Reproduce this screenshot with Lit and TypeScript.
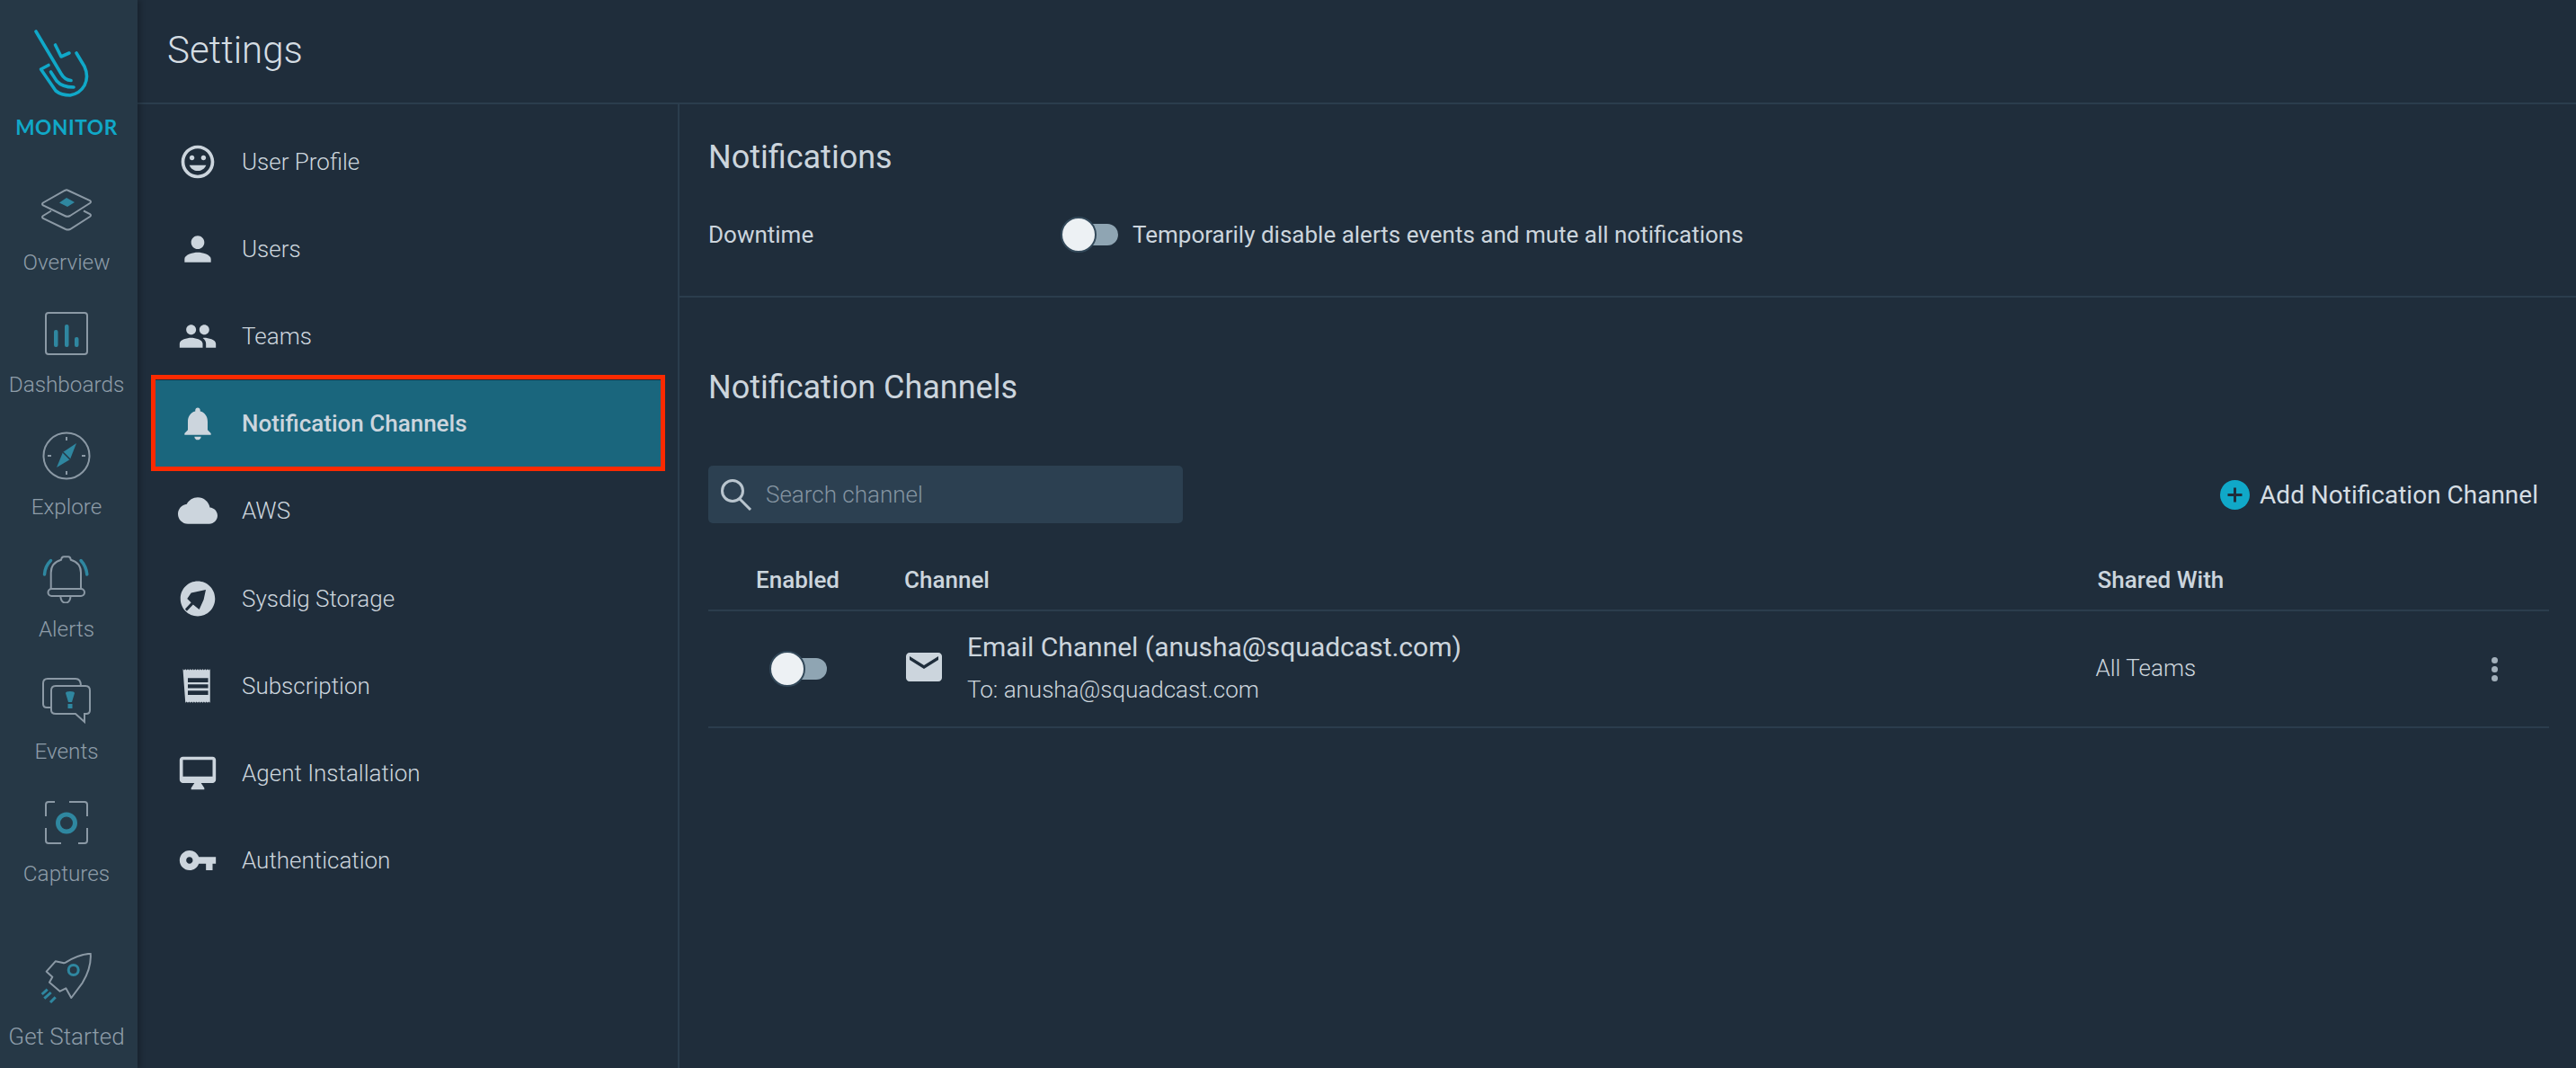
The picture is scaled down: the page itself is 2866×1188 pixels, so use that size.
import { LitElement, html, css, svg } from "lit";
import { customElement } from "lit/decorators.js";

const ACCENT = "#2f87a0";
const LINE = "#8b99a5";

const sideItems = [
  { label: "Overview", vb: "0 0 56 50", w: 56, h: 50, art: svg`
    <path d="M29 1.500 L54 13 Q56 14.500 54 16 L32 30 Q29 31.500 26 30 L2 18.500 Q0 17 2 15.500 L26 2 Q28 1 29 1.500Z" fill="none" stroke="${LINE}" stroke-width="2"/>
    <path d="M11 24.500 L2 30 Q0 31.500 2 33 L27 45 Q29.500 46 32 45 L54 31 Q56 29.500 54 28 L47 24.500" fill="none" stroke="${LINE}" stroke-width="2"/>
    <path d="M28 10 L37 15 L29 20 L20 15.500Z" fill="${ACCENT}"/>` },
  { label: "Dashboards", vb: "0 0 48 48", w: 48, h: 48, art: svg`
    <rect x="1" y="1" width="46" height="46" rx="3" fill="none" stroke="${LINE}" stroke-width="2"/>
    <rect x="10" y="20" width="4.500" height="19" rx="2" fill="${ACCENT}"/>
    <rect x="22" y="14" width="4.500" height="25" rx="2" fill="${ACCENT}"/>
    <rect x="33" y="28" width="4.500" height="11" rx="2" fill="${ACCENT}"/>` },
  { label: "Explore", vb: "0 0 54 54", w: 54, h: 54, art: svg`
    <circle cx="27" cy="27" r="25.500" fill="none" stroke="${LINE}" stroke-width="2"/>
    <path d="M27 6v4M27 44v4M6 27h4M44 27h4" stroke="${LINE}" stroke-width="2"/>
    <path d="M38 13 L31 31 L16 40 L23 23Z" fill="${ACCENT}"/>
    <path d="M23 23 L31 31" stroke="#263846" stroke-width="1.500"/>` },
  { label: "Alerts", vb: "-1 15 90 56", w: 90, h: 56, art: svg`
    <path d="M26.700 55 V37 Q26.700 26 38 22.700 Q38.500 19.300 41 19.300 H46 Q48.300 19.300 48.800 22.700 Q60 26 60 37 V55" fill="none" stroke="${LINE}" stroke-width="2"/>
    <rect x="23.500" y="55" width="40.500" height="8" rx="4" fill="none" stroke="${LINE}" stroke-width="2"/>
    <path d="M37.300 63.300 Q38 70.500 43 70.500 Q48 70.500 48.500 63.300" fill="none" stroke="${LINE}" stroke-width="2"/>
    <path d="M19.500 39 Q20 30 26.500 23.500 M66.800 39 Q66 30 60 23.500" fill="none" stroke="${ACCENT}" stroke-width="3.500" stroke-linecap="round"/>` },
  { label: "Events", vb: "0 -2 54 54", w: 54, h: 54, art: svg`
    <path d="M9 33 H5 Q1 33 1 29 V6 Q1 1 6 1 H37 Q43 1 43 9" fill="none" stroke="${LINE}" stroke-width="2"/>
    <path d="M15 9 H48 Q53 9 53 14 V36 Q53 40 49 40 H47 V49 L37 40 H15 Q10 40 10 36 V14 Q10 9 15 9Z" fill="none" stroke="${LINE}" stroke-width="2"/>
    <path d="M26 17 Q26 15 31 15 Q36 15 36 17 L33 27 H29Z M28.500 29 H33.500 V34 H28.500Z" fill="${ACCENT}"/>` },
  { label: "Captures", vb: "0 0 48 48", w: 48, h: 48, art: svg`
    <path d="M11 1 H4 Q1 1 1 4 V17 M27 1 H44 Q47 1 47 4 V17 M18 47 H4 Q1 47 1 44 V30 M37 47 H44 Q47 47 47 44 V30" fill="none" stroke="${LINE}" stroke-width="2"/>
    <circle cx="24" cy="24.500" r="9.500" fill="none" stroke="${ACCENT}" stroke-width="5"/>` },
];

const navItems = [
  { label: "User Profile", d: "M11.99 2C6.47 2 2 6.48 2 12s4.47 10 9.99 10C17.52 22 22 17.52 22 12S17.52 2 11.99 2zM12 20c-4.42 0-8-3.58-8-8s3.58-8 8-8 8 3.58 8 8-3.58 8-8 8zm3.500-9c.83 0 1.500-.67 1.500-1.500S16.330 8 15.500 8 14 8.670 14 9.500s.67 1.500 1.500 1.500zm-7 0c.83 0 1.500-.67 1.500-1.500S9.330 8 8.500 8 7 8.670 7 9.500 7.670 11 8.500 11zm3.500 6.500c2.330 0 4.310-1.460 5.110-3.500H6.890c.8 2.040 2.780 3.500 5.110 3.500z" },
  { label: "Users", d: "M12 12c2.210 0 4-1.790 4-4s-1.790-4-4-4-4 1.790-4 4 1.790 4 4 4zm0 2c-2.670 0-8 1.340-8 4v2h16v-2c0-2.660-5.330-4-8-4z" },
  { label: "Teams", d: "M16 11c1.660 0 2.990-1.340 2.990-3S17.660 5 16 5c-1.660 0-3 1.340-3 3s1.340 3 3 3zm-8 0c1.660 0 2.990-1.340 2.990-3S9.660 5 8 5C6.340 5 5 6.340 5 8s1.340 3 3 3zm0 2c-2.330 0-7 1.170-7 3.500V19h14v-2.500c0-2.330-4.670-3.500-7-3.500zm8 0c-.29 0-.62.02-.97.05 1.160.84 1.970 1.970 1.970 3.450V19h6v-2.500c0-2.330-4.670-3.500-7-3.500z" },
  { label: "Notification Channels", active: true, d: "M12 22c1.100 0 2-.9 2-2h-4c0 1.100.89 2 2 2zm6-6v-5c0-3.070-1.640-5.640-4.500-6.320V4c0-.83-.67-1.500-1.500-1.500s-1.500.67-1.500 1.500v.68C7.630 5.360 6 7.920 6 11v5l-2 2v1h16v-1l-2-2z" },
  { label: "AWS", d: "M19.350 10.040C18.670 6.590 15.640 4 12 4 9.110 4 6.600 5.640 5.350 8.040 2.340 8.360 0 10.910 0 14c0 3.310 2.690 6 6 6h13c2.760 0 5-2.240 5-5 0-2.640-2.050-4.780-4.650-4.960z" },
  { label: "Sysdig Storage", evenodd: true, d: "M12 1.400C6.200 1.400 1.500 6.100 1.500 12S6.200 22.600 12 22.600 22.500 17.900 22.500 12 17.800 1.400 12 1.400zM16.900 6.500L8 8.400 5.600 12 8 14.300 4.300 18.300 5.400 19.500 9.200 15.600 12.900 18.500 15.600 12.500Z" },
  { label: "Subscription", evenodd: true, d: "M3 1.800l.75.7.75-.7.75.7.75-.7.75.7.75-.7.75.7.75-.7.75.7.75-.7.75.7.75-.7.75.7.75-.7.75.7.75-.7.75.7.75-.7.75.7.75-.7.75.7.75-.7V22.200l-.75-.7-.75.7-.75-.7-.75.7-.75-.7-.75.7-.75-.7-.75.7-.75-.7-.75.7-.75-.7-.75.7-.75-.7-.75.7-.75-.7-.75.7-.75-.7-.75.7-.75-.7-.75.7zM6 7.200v2.600h12.300V7.200zM6 11v2.400h12.300V11zM6 14.900v2.500h12.300v-2.500z" },
  { label: "Agent Installation", d: "M21 2H3c-1.100 0-2 .9-2 2v12c0 1.100.9 2 2 2h7l-2 3v1h8v-1l-2-3h7c1.100 0 2-.9 2-2V4c0-1.100-.9-2-2-2zm0 12H3V4h18v10z" },
  { label: "Authentication", d: "M12.650 10C11.830 7.670 9.610 6 7 6c-3.310 0-6 2.690-6 6s2.690 6 6 6c2.610 0 4.830-1.670 5.650-4H17v4h4v-4h2v-4H12.650zM7 14c-1.100 0-2-.9-2-2s.9-2 2-2 2 .9 2 2-.9 2-2 2z" },
];

const MAIL = "M20 4H4c-1.100 0-1.990.9-1.990 2L2 18c0 1.100.9 2 2 2h16c1.100 0 2-.9 2-2V6c0-1.100-.9-2-2-2zm0 4l-8 5-8-5V6l8 5 8-5v2z";

@customElement("app-root")
export class AppRoot extends LitElement {
  static styles = css`
    :host {
      display: grid;
      grid-template-columns: 153px 1fr;
      height: 1188px;
      background: #1f2d3b;
      font-family: Roboto, "Liberation Sans", sans-serif;
      color: #ccd5dd;
      overflow: hidden;
    }
    .side {
      background: #263846;
      box-shadow: 4px 0 5px rgba(0, 0, 0, 0.2);
      display: flex;
      flex-direction: column;
      align-items: center;
      padding-right: 5px;
      position: relative;
      z-index: 1;
    }
    .logo { display: flex; flex-direction: column; align-items: center; height: 207px; padding-top: 33px; box-sizing: border-box; }
    .logo svg { display: block; width: 80px; height: 76px; }
    .logo span {
      margin-top: 19px;
      font: 700 22.600px/28px Lato, sans-serif;
      color: #10a8c8;
      letter-spacing: 0.6px;
    }
    .side-item { display: flex; flex-direction: column; align-items: center; height: 136px; }
    .side-icon { height: 56px; display: flex; align-items: center; justify-content: center; }
    .side-icon svg { display: block; }
    .side-label {
      margin-top: 15px;
      font-size: 24.300px;
      line-height: 28px;
      font-weight: 300;
      color: #8e9da9;
      white-space: nowrap;
    }
    .side-item.start { margin-top: auto; height: auto; padding-bottom: 21px; }
    .side-item.start .side-label { margin-top: 23px; font-size: 26px; }

    .content { display: grid; grid-template-rows: 116px 1fr; min-width: 0; }
    .top {
      border-bottom: 2px solid #2b3d4d;
      padding-left: 33px;
      display: flex;
      align-items: center;
      padding-bottom: 4px;
      font-size: 42px;
      font-weight: 300;
      color: #d5dde3;
    }
    .body { display: grid; grid-template-columns: 603px 1fr; min-height: 0; }
    .nav {
      border-right: 2px solid #2b3d4d;
      padding: 15px 19px 0 20px;
      display: flex;
      flex-direction: column;
    }
    .nav-row {
      height: 97.200px;
      flex: none;
      display: flex;
      align-items: center;
      gap: 27px;
      padding-left: 25px;
      font-size: 26px;
      font-weight: 300;
      color: #ccd5dd;
      position: relative;
    }
    .nav-row svg { width: 44px; height: 44px; fill: #ccd5dd; flex: none; }
    .nav-row.active { background: #1a667d; font-weight: 500; }
    .nav-row.active::after {
      content: "";
      position: absolute;
      inset: -6px -5px -4px;
      border: 5px solid #fb2a00;
    }
    .main { min-width: 0; }
    .notif { height: 215px; box-sizing: border-box; border-bottom: 2px solid #2b3d4d; padding: 37px 0 0 32px; }
    h2 { margin: 0; font-size: 36px; line-height: 44px; font-weight: 400; color: #ccd5dd; }
    .down { display: flex; align-items: center; margin-top: 44px; height: 40px; font-size: 26px; font-weight: 400; color: #ccd5dd; }
    .down .name { width: 393px; }
    .toggle { position: relative; width: 63px; height: 38px; flex: none; display: flex; align-items: center; }
    .toggle i { display: block; width: 100%; height: 24px; background: #8fa5b3; border-radius: 12px; }
    .toggle b {
      position: absolute;
      left: -1px; top: -1px;
      width: 36px; height: 36px;
      border: 2px solid #33495a;
      border-radius: 50%;
      background: #edf1f4;
    }
    .down .toggle { margin-right: 16px; }
    .channels { padding: 78px 31px 0 32px; }
    .bar { display: flex; justify-content: space-between; align-items: center; margin-top: 65px; }
    .search {
      width: 528px; height: 64px;
      background: #2c4051;
      border-radius: 5px;
      display: flex;
      align-items: center;
      gap: 15px;
      padding-left: 13px;
      box-sizing: border-box;
      font-size: 26px;
      font-weight: 300;
      color: #8494a1;
    }
    .search svg { width: 36px; height: 36px; flex: none; }
    .add { display: flex; align-items: center; gap: 11px; font-size: 28px; font-weight: 400; color: #d5dde3; padding-right: 11px; }
    .add svg { width: 33px; height: 33px; display: block; }
    .grid { display: grid; grid-template-columns: 200px 1327.500px 400px 120px; margin-top: 35px; }
    .head {
      height: 63px;
      border-bottom: 2px solid #2b3d4d;
      display: flex;
      align-items: center;
      padding-left: 18px;
      padding-bottom: 5px;
      box-sizing: border-box;
      font-size: 26px;
      font-weight: 500;
      color: #ccd5dd;
    }
    .head.en { padding-left: 53px; }
    .cell {
      height: 130px;
      border-bottom: 2px solid #2b3d4d;
      display: flex;
      align-items: center;
      box-sizing: border-box;
      padding-left: 18px;
      font-size: 26px;
      font-weight: 300;
    }
    .cell.en { padding-left: 69px; }
    .cell.ch { padding-bottom: 4px; }
    .cell.ch svg { width: 48px; height: 48px; fill: #ccd5dd; flex: none; margin: 0 24px 0 -2px; }
    .title { font-size: 30px; font-weight: 400; line-height: 36px; color: #ccd5dd; }
    .sub { font-size: 26px; font-weight: 300; line-height: 30px; margin-top: 14px; }
    .cell.sh { padding-left: 16px; padding-bottom: 2px; }
    .cell.more { padding-left: 56px; }
    .dots { display: flex; flex-direction: column; gap: 3px; }
    .dots i { display: block; width: 7px; height: 7px; border-radius: 50%; background: #a3b0bb; }
  `;

  render() {
    return html`
      <aside class="side">
        <div class="logo">
          <svg viewBox="34 33 80 76" fill="none" stroke="#10a8c8" stroke-width="3.600" stroke-linecap="round" stroke-linejoin="round">
            <path d="M40 35 L68 82 Q72 89 79 89.500" />
            <path d="M61.500 50 L68 63 L77 59" />
            <path d="M85 59 L94 74 Q99 85 94 95 Q89 104 78 106 Q68 106 62 101 L45.500 77 L54 72.500" />
            <path d="M56.500 80 L63 90 Q69 97 82 97" />
          </svg>
          <span>MONITOR</span>
        </div>
        ${sideItems.map(
          (s) => html`<div class="side-item">
            <div class="side-icon">
              <svg width=${s.w} height=${s.h} viewBox=${s.vb}>${s.art}</svg>
            </div>
            <div class="side-label">${s.label}</div>
          </div>`
        )}
        <div class="side-item start">
          <div class="side-icon">
            <svg width="90" height="56" viewBox="-1 10 90 56" fill="none">
              <path d="M70.700 10.700 Q56 12 43 20.700 Q41.500 21.500 40 21 L31.700 19.300 L21.700 30.700 L28.300 36.700 L25 42.700 L36.700 52.700 L43.300 49.300 L49.300 60 L61.700 43.300 Q72 26 70.700 10.700Z" stroke="${LINE}" stroke-width="2" stroke-linejoin="round"/>
              <circle cx="51.700" cy="29" r="5.500" stroke="${ACCENT}" stroke-width="3"/>
              <path d="M16.700 56 L22.700 50.700 M19.300 60.700 L26.700 54 M26 65 L31.700 59.300" stroke="${ACCENT}" stroke-width="3"/>
            </svg>
          </div>
          <div class="side-label">Get Started</div>
        </div>
      </aside>
      <div class="content">
        <header class="top">Settings</header>
        <div class="body">
          <nav class="nav">
            ${navItems.map(
              (n) => html`<div class="nav-row ${n.active ? "active" : ""}">
                <svg viewBox="0 0 24 24"><path d=${n.d} fill-rule=${n.evenodd ? "evenodd" : "nonzero"}></path></svg>
                <span>${n.label}</span>
              </div>`
            )}
          </nav>
          <main class="main">
            <section class="notif">
              <h2>Notifications</h2>
              <div class="down">
                <span class="name">Downtime</span>
                <span class="toggle"><i></i><b></b></span>
                <span>Temporarily disable alerts events and mute all notifications</span>
              </div>
            </section>
            <section class="channels">
              <h2>Notification Channels</h2>
              <div class="bar">
                <div class="search">
                  <svg viewBox="0 0 36 36" fill="none" stroke="#b9c5ce" stroke-width="3">
                    <circle cx="14" cy="14" r="11.500"></circle>
                    <path d="M22 23 L34 35"></path>
                  </svg>
                  <span>Search channel</span>
                </div>
                <div class="add">
                  <svg viewBox="0 0 33 33">
                    <circle cx="16.500" cy="16.500" r="16.500" fill="#10a8c8"></circle>
                    <path d="M16.500 8.500v16M8.500 16.500h16" stroke="#1f2d3b" stroke-width="3"></path>
                  </svg>
                  <span>Add Notification Channel</span>
                </div>
              </div>
              <div class="grid">
                <div class="head en">Enabled</div>
                <div class="head">Channel</div>
                <div class="head">Shared With</div>
                <div class="head"></div>
                <div class="cell en"><span class="toggle"><i></i><b></b></span></div>
                <div class="cell ch">
                  <svg viewBox="0 0 24 24"><path d=${MAIL}></path></svg>
                  <div>
                    <div class="title">Email Channel (anusha@squadcast.com)</div>
                    <div class="sub">To: anusha@squadcast.com</div>
                  </div>
                </div>
                <div class="cell sh">All Teams</div>
                <div class="cell more"><div class="dots"><i></i><i></i><i></i></div></div>
              </div>
            </section>
          </main>
        </div>
      </div>
    `;
  }
}
